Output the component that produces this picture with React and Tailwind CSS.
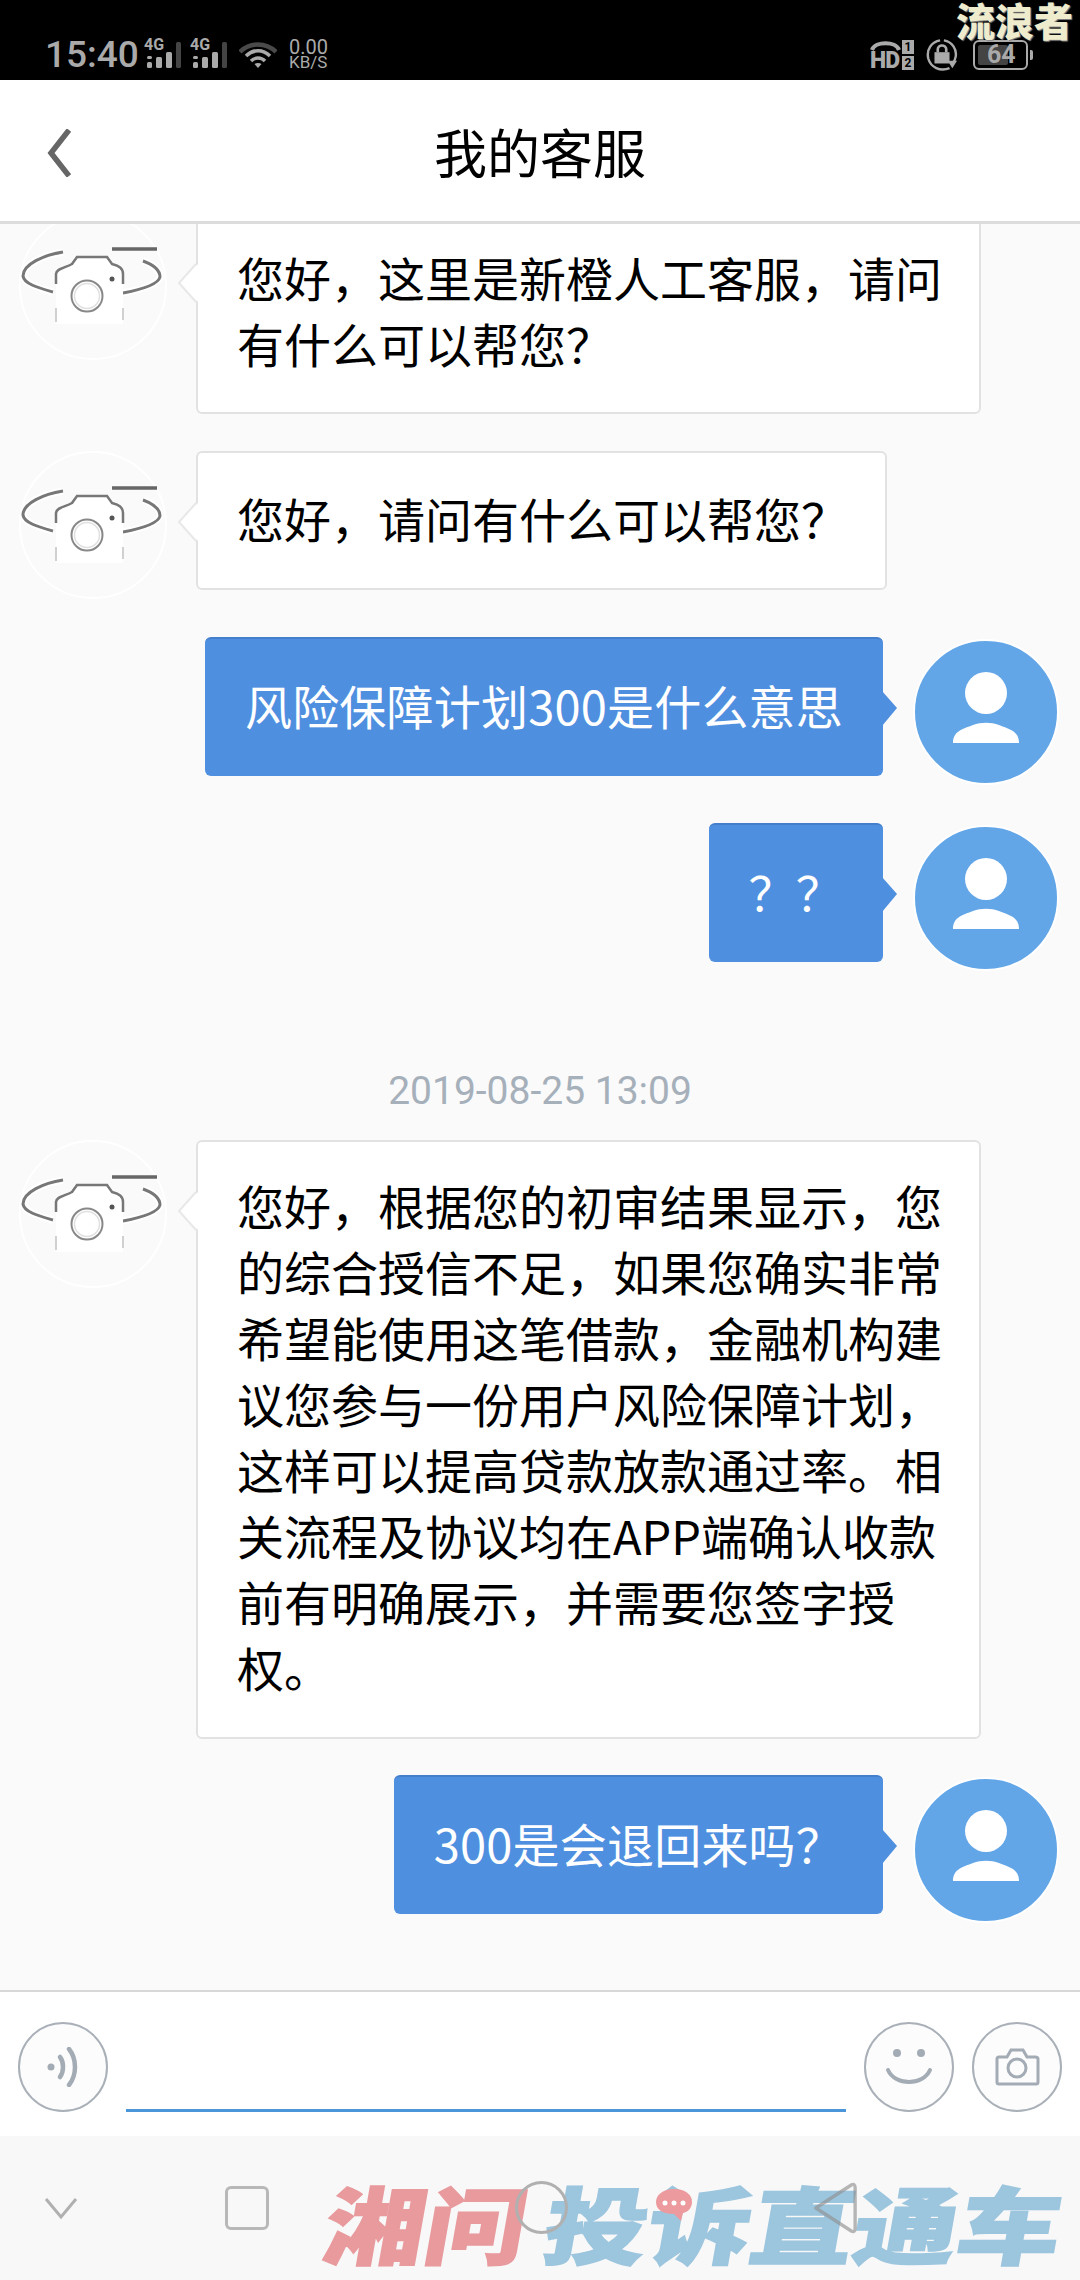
const cjk = { fontFamily: '"Noto Sans CJK SC", "Noto Sans", sans-serif' };

function Signal() {
  return (
    <div className="relative w-[38px] h-[28px]">
      <span className="absolute left-0 top-[-4px] text-[16px] leading-[16px] font-bold text-[#aaaaaa]" style={{ fontFamily: 'Roboto, sans-serif' }}>4G</span>
      <svg width="38" height="28" viewBox="0 0 38 28" className="absolute left-0 top-0">
        <rect x="3" y="21" width="5" height="6" rx="1.5" fill="#aaaaaa" />
        <rect x="3" y="15" width="5" height="3" rx="1.5" fill="#aaaaaa" />
        <rect x="12" y="16" width="6" height="11" rx="1.5" fill="#aaaaaa" />
        <rect x="22" y="11" width="6" height="16" rx="1.5" fill="#aaaaaa" />
        <rect x="32" y="1" width="5" height="26" rx="1.5" fill="#444444" />
      </svg>
    </div>
  );
}

function Wifi() {
  return (
    <svg width="38" height="28" viewBox="0 0 38 28" fill="none">
      <path d="M1 11 C11 1 27 1 37 11" stroke="#4a4a4a" strokeWidth="4.500" />
      <path d="M7 15 C14 8 24 8 31 15" stroke="#aaaaaa" strokeWidth="3.500" />
      <path d="M12 20 C16 16 22 16 26 20" stroke="#aaaaaa" strokeWidth="3.500" />
      <path d="M15.500 23 L19 27 L22.500 23 C20.500 21.500 17.500 21.500 15.500 23 Z" fill="#aaaaaa" />
    </svg>
  );
}

function StatusBar() {
  return (
    <div className="relative h-[80px] shrink-0 bg-black text-[#aaaaaa]" style={{ fontFamily: 'Roboto, sans-serif' }}>
      <div className="flex items-center h-[30px] pt-[40px] box-content pl-[45px]">
        <span className="text-[37px] leading-[30px] font-medium w-[99px]">15:40</span>
        <Signal />
        <span className="w-[8px]" />
        <Signal />
        <span className="w-[11px]" />
        <Wifi />
        <span className="w-[12px]" />
        <div className="flex flex-col items-start">
          <span className="text-[20px] leading-[15px]">0.00</span>
          <span className="text-[17px] leading-[15px]">KB/S</span>
        </div>
        <div className="ml-auto flex items-center pr-[52px]">
          <div className="relative w-[31px] h-[30px] mr-[1px]">
            <svg width="31" height="12" viewBox="0 0 31 12" className="absolute left-0 top-0" fill="none">
              <path d="M2 10 C5 1 26 1 29 10" stroke="#aaaaaa" strokeWidth="4" />
            </svg>
            <span className="absolute left-0 bottom-[-3px] text-[23px] leading-[24px] font-black tracking-[-1px]">HD</span>
          </div>
          <div className="flex flex-col gap-[2px] w-[12px] mr-[12px]">
            <span className="h-[14px] bg-[#aaaaaa] text-black text-[12px] leading-[14px] font-bold text-center">1</span>
            <span className="h-[14px] bg-[#aaaaaa] text-black text-[12px] leading-[14px] font-bold text-center">2</span>
          </div>
          <svg width="32" height="32" viewBox="0 0 34 34" fill="none" className="mr-[15px]">
            <path d="M25 31 C15 35 5 30 2.500 21 C0 11 6 3 15 1.500" stroke="#aaaaaa" strokeWidth="2.600" />
            <path d="M19 1.500 C28 3 33 11 31.500 19 C31 22 30 24 28 26" stroke="#aaaaaa" strokeWidth="2.600" />
            <path d="M23 23 L33 23 L28 31 Z" fill="#aaaaaa" />
            <rect x="9" y="14" width="16" height="12" fill="#aaaaaa" />
            <path d="M12.500 14 V11 C12.500 5.500 21.500 5.500 21.500 11 V14" stroke="#aaaaaa" strokeWidth="2.800" />
          </svg>
          <div className="relative w-[55px] h-[30px] rounded-[6px] border-2 border-[#aaaaaa] flex items-center">
            <span className="absolute left-[3px] top-[3px] bottom-[3px] w-[30px] rounded-[2px] bg-[#444444]" />
            <span className="relative w-[43px] pl-[12px] text-[25px] leading-[26px] font-bold">64</span>
            <span className="absolute right-[-7px] top-[8px] w-[3px] h-[10px] bg-[#aaaaaa] rounded-r-[2px]" />
          </div>
        </div>
      </div>
      <span className="absolute right-[7px] top-0 text-[39px] leading-[38px] font-black text-[#efebcd]" style={{ ...cjk, textShadow: '1px 1px 1px #888' }}>流浪者</span>
    </div>
  );
}

function Header() {
  return (
    <div className="relative h-[144px] shrink-0 bg-white border-b-[3px] border-[#dcdcdc] flex items-center justify-center">
      <svg width="26" height="48" viewBox="0 0 26 48" fill="none" className="absolute left-[46px] top-[49px]">
        <path d="M23 1 L5 24 L23 47" stroke="#666666" strokeWidth="5.500" />
      </svg>
      <span className="text-[53px] leading-[72px] text-black" style={cjk}>我的客服</span>
    </div>
  );
}

function ServiceAvatar() {
  return (
    <svg width="148" height="148" viewBox="0 0 148 148" fill="none" className="shrink-0 blur-[0.4px]">
      <circle cx="74" cy="74" r="73" fill="#fafafa" stroke="#ffffff" strokeWidth="2" />
      <path d="M44 40 C25 43 4 52 4 64 C5 72 20 76 34 80" stroke="#ffffff" strokeWidth="7" />
      <path d="M44 40 C25 43 4 52 4 64 C5 72 20 76 34 80" stroke="#777777" strokeWidth="3" />
      <path d="M93 37 H138" stroke="#666666" strokeWidth="3.500" />
      <path d="M124 49 C135 53 141 58 141 65 C139 73 120 78 104 81" stroke="#ffffff" strokeWidth="7" />
      <path d="M124 49 C135 53 141 58 141 65 C139 73 120 78 104 81" stroke="#777777" strokeWidth="3" />
      <path d="M37 112 V62 C38 56 46 56 53 52 L58 45 H88 L93 52 C100 54 104 56 104 62 V112 Z" fill="#ffffff" />
      <path d="M37 72 V62 C38 56 46 56 53 52 L58 45 H88 L93 52 C100 54 104 56 104 62 V72" stroke="#777777" strokeWidth="2.500" />
      <path d="M37 96 V110 M104 96 V108" stroke="#d0d0d0" strokeWidth="2" />
      <circle cx="68" cy="84" r="15.500" stroke="#888888" strokeWidth="2" />
      <circle cx="68" cy="84" r="12.500" stroke="#e0e0e0" strokeWidth="1.500" />
      <circle cx="93" cy="67" r="2.500" fill="#555555" />
    </svg>
  );
}

function UserAvatar() {
  return (
    <svg width="146" height="146" viewBox="0 0 146 146" className="shrink-0">
      <circle cx="73" cy="73" r="72" fill="#62a6e8" stroke="#ffffff" strokeWidth="2" />
      <circle cx="73" cy="54" r="21" fill="#ffffff" />
      <path d="M40 104 C40 92 50 90 60 86 C68 83 78 83 86 86 C96 90 106 92 106 104 H40 Z" fill="#ffffff" />
    </svg>
  );
}

function LeftTail() {
  return (
    <svg width="21" height="40" viewBox="0 0 21 40" fill="none" className="absolute left-[-21px] top-[49px]">
      <path d="M21 1 L2 20 L21 39 Z" fill="#ffffff" />
      <path d="M19 1 L2 20 L19 39" stroke="#e8e8e8" strokeWidth="2" />
    </svg>
  );
}

function LeftRow({ className, children, bubble }) {
  return (
    <div className={`flex items-start pl-[19px] ${className}`}>
      <ServiceAvatar />
      <div className={`relative ml-[29px] bg-white border-2 border-[#e2e2e2] rounded-[6px] pl-[39px] pr-[30px] text-[47px] leading-[66px] text-black ${bubble}`} style={cjk}>
        <LeftTail />
        {children}
      </div>
    </div>
  );
}

function RightRow({ className, children }) {
  return (
    <div className={`flex items-start justify-end pr-[21px] ${className}`}>
      <div className="relative bg-[#4f8fe0] border-t-2 border-[#437fcd] rounded-[6px] pt-[31px] pb-[37px] pl-[40px] pr-[40px] text-[47px] leading-[69px] tracking-[0.2px] text-white whitespace-nowrap" style={cjk}>
        {children}
        <svg width="16" height="36" viewBox="0 0 16 36" className="absolute right-[-15px] top-[52px]">
          <path d="M0 0 L15 17 L0 35 Z" fill="#4f8fe0" />
        </svg>
      </div>
      <div className="ml-[30px] mt-[2px]"><UserAvatar /></div>
    </div>
  );
}

function Chat() {
  return (
    <div className="flex-1 overflow-hidden bg-[#fafafa]">
      <LeftRow className="-mt-[12px]" bubble="w-[785px] pt-[30px] pb-[36px]">您好，这里是新橙人工客服，请问有什么可以帮您？</LeftRow>
      <LeftRow className="mt-[37px]" bubble="w-[691px] pt-[32px] pb-[37px]">您好，请问有什么可以帮您？</LeftRow>
      <RightRow className="mt-[38px]">风险保障计划300是什么意思</RightRow>
      <RightRow className="mt-[38px]">？？</RightRow>
      <div className="mt-[93px] h-[54px] text-center text-[39px] leading-[54px] text-[#a6b0ba]" style={{ fontFamily: 'Roboto, sans-serif' }}>2019-08-25 13:09</div>
      <LeftRow className="mt-[22px]" bubble="w-[785px] pt-[30px] pb-[37px]">您好，根据您的初审结果显示，您的综合授信不足，如果您确实非常希望能使用这笔借款，金融机构建议您参与一份用户风险保障计划，这样可以提高贷款放款通过率。相关流程及协议均在APP端确认收款前有明确展示，并需要您签字授权。</LeftRow>
      <RightRow className="mt-[36px]">300是会退回来吗？</RightRow>
    </div>
  );
}

function RoundButton({ children, className }) {
  return (
    <div className={`w-[90px] h-[90px] shrink-0 rounded-full border-2 border-[#a9b0b8] bg-[#fcfcfc] flex items-center justify-center ${className}`}>
      {children}
    </div>
  );
}

function InputBar() {
  return (
    <div className="h-[146px] shrink-0 bg-white border-t-[2px] border-[#d8d8d8] flex items-start pt-[30px] pl-[18px]">
      <RoundButton>
        <svg width="32" height="40" viewBox="0 0 32 40" fill="none" stroke="#a3abb4" strokeLinecap="round">
          <circle cx="4" cy="20" r="3.500" fill="#a3abb4" stroke="none" />
          <path d="M13 10 C17 15 17 25 13 30" strokeWidth="4.500" />
          <path d="M22 2 C30 12 30 28 22 38" strokeWidth="4.500" />
        </svg>
      </RoundButton>
      <div className="ml-[18px] mt-[87px] w-[720px] h-[3px] bg-[#4b96d9]" />
      <RoundButton className="ml-[18px]">
        <svg width="48" height="38" viewBox="0 0 48 38" fill="none" stroke="#a3abb4">
          <circle cx="12" cy="5" r="4" fill="#a3abb4" stroke="none" />
          <circle cx="36" cy="5" r="4" fill="#a3abb4" stroke="none" />
          <path d="M3 22 C10 38 38 38 45 22" strokeWidth="4" strokeLinecap="round" />
        </svg>
      </RoundButton>
      <RoundButton className="ml-[18px]">
        <svg width="46" height="38" viewBox="0 0 46 38" fill="none" stroke="#a3abb4" strokeWidth="3">
          <path d="M3 11 Q3 9 5 9 H13 L17 2 H29 L33 9 H41 Q44 9 44 11 V34 Q44 36 42 36 H5 Q3 36 3 34 Z" />
          <circle cx="23" cy="20" r="9" />
        </svg>
      </RoundButton>
    </div>
  );
}

function NavBar() {
  return (
    <div className="relative h-[144px] shrink-0 bg-[#f8f8f8]">
      <span className="absolute left-[326px] top-[36px] w-max text-[84px] leading-[100px] font-black whitespace-nowrap text-[#e89a9d] origin-left" style={{ ...cjk, transform: 'skewX(-10deg) scaleX(1.2)', WebkitTextStroke: '1.5px #e89a9d' }}>湘问</span>
      <span className="absolute left-[546px] top-[36px] w-max text-[84px] leading-[100px] font-black whitespace-nowrap text-[#9cc5de] origin-left" style={{ ...cjk, transform: 'skewX(-10deg) scaleX(1.23)', WebkitTextStroke: '1.5px #9cc5de' }}>投诉直通车</span>
      <svg width="38" height="34" viewBox="0 0 38 34" className="absolute left-[655px] top-[52px]">
        <path d="M19 1 C31 1 37 7 37 14 C37 20 33 24 28 25 L26 33 L19 26 C8 26 1 22 1 14 C1 7 8 1 19 1 Z" fill="#ec9a9d" />
        <circle cx="10" cy="15" r="2.500" fill="#ffffff" />
        <circle cx="19" cy="15" r="2.500" fill="#ffffff" />
        <circle cx="28" cy="15" r="2.500" fill="#ffffff" />
      </svg>
      <div className="absolute inset-0 flex items-start">
        <svg width="34" height="24" viewBox="0 0 34 24" fill="none" className="ml-[44px] mt-[60px]">
          <path d="M2 3 L17 21 L32 3" stroke="#b0b0b0" strokeWidth="3" />
        </svg>
        <div className="ml-[147px] mt-[50px] w-[44px] h-[44px] rounded-[6px] border-[3px] border-[#b8b8b8]" />
        <div className="ml-[246px] mt-[45px] w-[53px] h-[53px] rounded-full border-[3px] border-[#b0b0b0]" />
        <svg width="46" height="54" viewBox="0 0 48 54" fill="none" className="ml-[244px] mt-[45px]">
          <path d="M4 27 L41 3 Q45 1 45 6 V48 Q45 53 41 51 Z" stroke="#909090" strokeOpacity="0.65" strokeWidth="3.500" strokeLinejoin="round" />
        </svg>
      </div>
    </div>
  );
}

export default function App() {
  return (
    <div className="w-[1080px] h-[2280px] flex flex-col">
      <StatusBar />
      <Header />
      <Chat />
      <InputBar />
      <NavBar />
    </div>
  );
}
